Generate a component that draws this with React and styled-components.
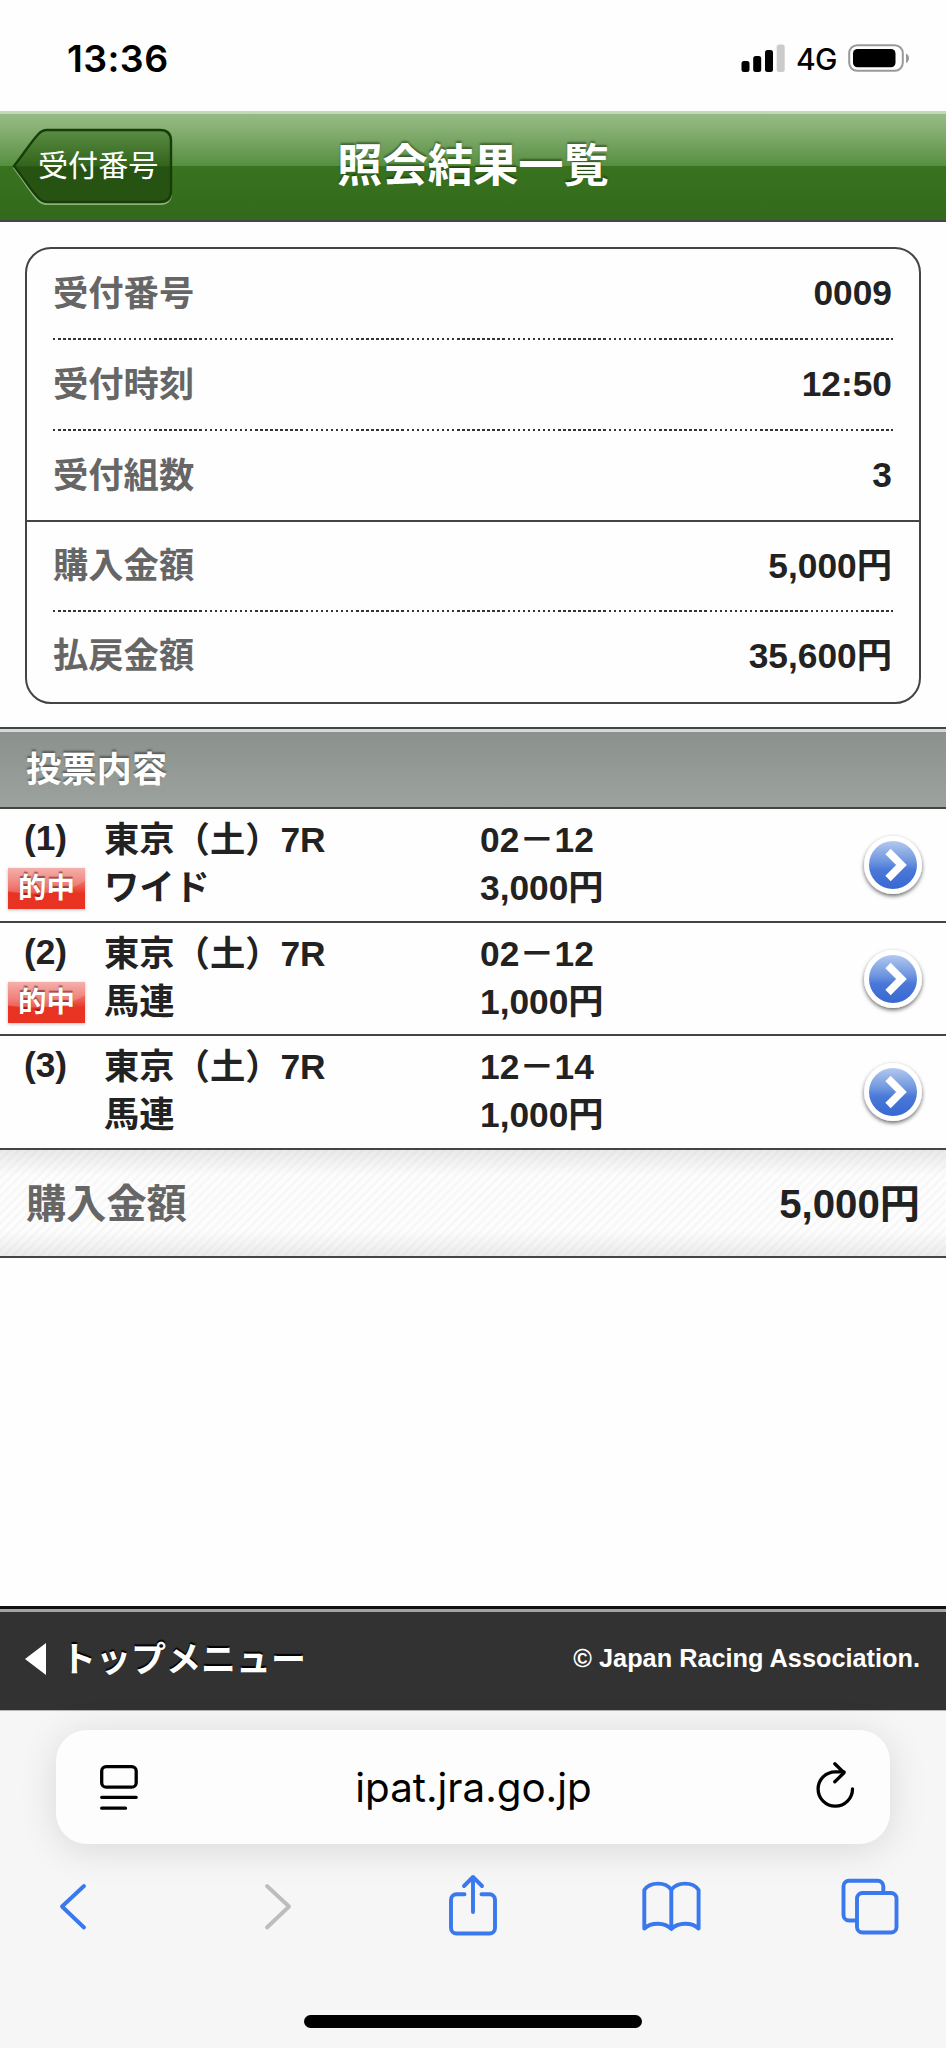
import styled, { createGlobalStyle } from "styled-components";

const GlobalStyle = createGlobalStyle`
  * {
    box-sizing: border-box;
  }
  body {
    margin: 0;
    background: #fefefe;
    color: #222;
    font-family: "Liberation Sans", "Noto Sans CJK JP", sans-serif;
  }
  svg {
    display: block;
    flex: none;
  }
`;

const Container = styled.div`
  width: 946px;
  height: 2048px;
  display: flex;
  flex-direction: column;
  overflow: hidden;
`;

const StatusBar = styled.div`
  height: 111px;
  padding: 5px 36px 0 67px;
  display: flex;
  align-items: center;
  justify-content: space-between;
  font-family: Inter, sans-serif;
  color: #000;
`;
const Clock = styled.span`
  font-size: 37.5px;
  font-weight: 600;
  letter-spacing: 0.4px;
`;
const StatusIcons = styled.div`
  display: flex;
  align-items: center;
  gap: 11px;
`;
const Network = styled.span`
  width: 41px;
  font-size: 30px;
  font-weight: 500;
  letter-spacing: -0.6px;
  line-height: 30px;
  padding-top: 1px;
`;

const Header = styled.header`
  height: 111px;
  display: grid;
  grid-template-columns: 180px 1fr 180px;
  align-items: center;
  border-top: 3px solid #c0d9b6;
  border-bottom: 2px solid #444;
  background: linear-gradient(
    #93bb83 0,
    #8bb278 12px,
    #568f40 52px,
    #39731f 52px,
    #32691c 100%
  );
`;
const BackButton = styled.a`
  display: grid;
  align-items: center;
  padding: 0 0 2px 11px;
  color: white;
  > * {
    grid-area: 1 / 1;
  }
`;
const BackLabel = styled.span`
  padding-left: 27px;
  font-size: 30.1px;
  line-height: 40px;
  position: relative;
`;
const Title = styled.h1`
  margin: 0;
  font-size: 45.3px;
  line-height: 60px;
  font-weight: 700;
  color: white;
  text-align: center;
  text-shadow: 0 -2px 2px rgba(0, 0, 0, 0.4);
`;

const Card = styled.dl`
  margin: 25px 25px 0;
  height: 457px;
  border: 2px solid #444;
  border-radius: 26px;
  display: grid;
  grid-template-rows: 91px 91px 91px 90px 1fr;
  flex: none;
`;
const CardRow = styled.div`
  display: flex;
  justify-content: space-between;
  align-items: center;
  margin: ${(p) => (p.$divider === "solid" ? "0" : "0 26px")};
  padding: ${(p) => (p.$divider === "solid" ? "0 26px" : "0 0 2px")};
  font-size: 35.3px;
  font-weight: 700;
  line-height: 50px;
  border-bottom: ${(p) => (p.$divider === "solid" ? "2px solid #444" : "none")};
  background: ${(p) =>
    p.$divider === "dotted"
      ? "repeating-linear-gradient(90deg, #333 0, #333 2.5px, transparent 2.5px, transparent 5.05px) bottom / 100% 2px no-repeat"
      : "none"};
`;
const Label = styled.dt`
  color: #666;
`;
const Value = styled.dd`
  margin: 0;
  padding: 0 1px 1px 0;
`;

const SectionTitle = styled.h2`
  flex: none;
  margin: 23px 0 0;
  height: 82px;
  padding: 0 26px;
  border-top: 2px solid #444;
  border-bottom: 2px solid #444;
  background: linear-gradient(#d5dad6 0, #d5dad6 3px, #8b918c 3px, #9ca39e 100%);
  color: white;
  font-size: 35.3px;
  line-height: 82px;
  text-shadow: 0 -2px 2px rgba(0, 0, 0, 0.4);
`;
const BetRow = styled.div`
  flex: none;
  height: ${(p) => p.$height}px;
  display: grid;
  grid-template-columns: 104px 376px 1fr 88px;
  padding-top: 7px;
  border-bottom: 2px solid #444;
  font-size: 35.3px;
  font-weight: 700;
  line-height: 48px;
  > svg {
    margin-top: 14px;
  }
`;
const BetNumber = styled.div`
  padding-left: 8px;
  line-height: 44px;
`;
const Index = styled.div`
  width: 75px;
  text-align: center;
`;
const HitBadge = styled.div`
  width: 77px;
  height: 41px;
  margin-top: 8px;
  background: radial-gradient(
      ellipse 62px 26px at 32% 0,
      rgba(255, 255, 255, 0.2) 96%,
      transparent
    ),
    linear-gradient(#f29c97 0, #ec5a51 45%, #e83323 62%, #e93423 100%);
  box-shadow: 0 1px 3px rgba(0, 0, 0, 0.25);
  color: white;
  font-size: 28.5px;
  line-height: 41px;
  text-align: center;
  text-shadow: 0 -2px 1px rgba(80, 0, 0, 0.5);
`;
const BetInfo = styled.div`
  display: flex;
  flex-direction: column;
`;
const Total = styled.div`
  flex: none;
  height: 108px;
  display: flex;
  align-items: center;
  justify-content: space-between;
  padding: 3px 26px 0;
  border-bottom: 2px solid #444;
  background: linear-gradient(
      rgba(0, 0, 0, 0.08),
      transparent 24%,
      transparent 76%,
      rgba(0, 0, 0, 0.07)
    ),
    repeating-linear-gradient(135deg, #f7f7f7 0, #f7f7f7 1.5px, #fdfdfd 2.5px, #fdfdfd 5.5px, #f7f7f7 6.4px);
  font-size: 40.2px;
  font-weight: 700;
  line-height: 56px;
`;
const TotalLabel = styled.span`
  color: #666;
`;

const Footer = styled.footer`
  flex: none;
  margin-top: auto;
  height: 104px;
  display: flex;
  align-items: center;
  justify-content: space-between;
  padding: 0 26px 0 25px;
  border-top: 3px solid #111;
  background: linear-gradient(#a5a5a5 3px, #323232 3px);
  color: white;
  font-weight: 700;
`;
const TopMenu = styled.a`
  display: flex;
  align-items: center;
  gap: 15px;
  font-size: 35px;
  line-height: 50px;
  text-shadow: 0 -2px 1px #000;
`;
const Copyright = styled.small`
  font-size: 25.3px;
  padding-bottom: 3px;
`;

const BrowserBar = styled.div`
  height: 338px;
  padding: 19px 56px 0;
  border-top: 1px solid #b5b5b5;
  background: #f6f6f6;
  flex: none;
`;
const AddressBar = styled.div`
  height: 114px;
  display: flex;
  align-items: center;
  justify-content: space-between;
  padding: 0 33px 0 42px;
  border-radius: 31px;
  background: #fdfdfd;
  box-shadow: 0 5px 38px rgba(0, 0, 0, 0.12);
`;
const Url = styled.span`
  padding-right: 6px;
  font-family: Inter, sans-serif;
  font-size: 40.3px;
  color: #000;
`;
const Toolbar = styled.nav`
  display: flex;
  justify-content: space-between;
  margin: 28px -11px 0 -15px;
  color: #3a78ee;
`;
const ToolIcon = styled.svg`
  width: 64px;
  height: 64px;
  fill: none;
  stroke: ${(p) => (p.$disabled ? "#bdbdbd" : "currentColor")};
  stroke-width: 3.9;
  stroke-linecap: round;
  stroke-linejoin: round;
`;
const HomeIndicator = styled.div`
  width: 338px;
  height: 13px;
  margin: 79px auto 0;
  border-radius: 7px;
  background: #000;
`;

const summary = [
  { label: "受付番号", value: "0009", divider: "dotted" },
  { label: "受付時刻", value: "12:50", divider: "dotted" },
  { label: "受付組数", value: "3", divider: "solid" },
  { label: "購入金額", value: "5,000円", divider: "dotted" },
  { label: "払戻金額", value: "35,600円" },
];

const bets = [
  { race: "東京（土）7R", type: "ワイド", pick: "02－12", amount: "3,000円", hit: true, height: 114 },
  { race: "東京（土）7R", type: "馬連", pick: "02－12", amount: "1,000円", hit: true, height: 113 },
  { race: "東京（土）7R", type: "馬連", pick: "12－14", amount: "1,000円", hit: false, height: 114 },
];

const SignalIcon = () => (
  <svg width="44" height="28" viewBox="0 0 44 28">
    <rect x="0.5" y="17" width="8" height="11" rx="2.5" />
    <rect x="12.2" y="12" width="8" height="16" rx="2.5" />
    <rect x="24" y="6" width="8" height="22" rx="2.5" />
    <rect x="35.7" y="0.5" width="8" height="27.5" rx="2.5" fill="#cbcbcb" />
  </svg>
);

const BatteryIcon = () => (
  <svg width="62" height="28" viewBox="0 0 62 28">
    <rect x="1.2" y="1.2" width="53.6" height="25.6" rx="8" fill="none" stroke="#999" strokeWidth="2" />
    <rect x="5" y="5" width="42.5" height="18.2" rx="4.5" />
    <path d="M58 9.5c4 1.5 4 8 0 9.5z" fill="#999" />
  </svg>
);

const BackShape = () => (
  <svg width="164" height="78" viewBox="0 0 164 78">
    <defs>
      <linearGradient id="back" x1="0" y1="0" x2="0" y2="1">
        <stop offset="0" stopColor="#5a8c43" />
        <stop offset="0.5" stopColor="#33641b" />
        <stop offset="0.51" stopColor="#265311" />
        <stop offset="1" stopColor="#275213" />
      </linearGradient>
    </defs>
    <path
      d="M3 40 C14 26 20 15 27 8 Q31 4 36 4 H149 Q160 4 160 15 V65 Q160 76 149 76 H36 Q31 76 27 72 C20 65 14 54 3 40Z"
      fill="none"
      stroke="#8cb37b"
      strokeWidth="2"
      transform="translate(0 1)"
    />
    <path
      d="M3 39 C14 25 20 15 27 7.500 Q31 3 36 3 H149 Q160 3 160 14 V64 Q160 75 149 75 H36 Q31 75 27 70.500 C20 63 14 53 3 39Z"
      fill="url(#back)"
      stroke="#173d08"
      strokeWidth="2.4"
    />
  </svg>
);

const ArrowBadge = () => (
  <svg width="70" height="74" viewBox="0 0 70 74">
    <defs>
      <linearGradient id="blue" x1="0" y1="0" x2="0" y2="1">
        <stop offset="0" stopColor="#b3c9ee" />
        <stop offset="0.42" stopColor="#6f96df" />
        <stop offset="0.6" stopColor="#4a78d8" />
        <stop offset="1" stopColor="#3768d2" />
      </linearGradient>
      <filter id="shade" x="-20%" y="-20%" width="140%" height="150%">
        <feDropShadow dx="0" dy="2" stdDeviation="2.2" floodColor="#000" floodOpacity="0.6" />
      </filter>
    </defs>
    <circle cx="35" cy="35" r="29" fill="#fff" filter="url(#shade)" />
    <circle cx="35" cy="35" r="24" fill="url(#blue)" />
    <path d="M30 21.500 L43.500 35 L30 48.500" fill="none" stroke="#fff" strokeWidth="7.500" />
  </svg>
);

function App() {
  return (
    <Container>
      <GlobalStyle />
      <StatusBar>
        <Clock>13:36</Clock>
        <StatusIcons>
          <SignalIcon />
          <Network>4G</Network>
          <BatteryIcon />
        </StatusIcons>
      </StatusBar>

      <Header>
        <BackButton>
          <BackShape />
          <BackLabel>受付番号</BackLabel>
        </BackButton>
        <Title>照会結果一覧</Title>
      </Header>

      <Card>
        {summary.map((row) => (
          <CardRow key={row.label} $divider={row.divider}>
            <Label>{row.label}</Label>
            <Value>{row.value}</Value>
          </CardRow>
        ))}
      </Card>

      <SectionTitle>投票内容</SectionTitle>
      {bets.map((bet, i) => (
        <BetRow key={i} $height={bet.height}>
          <BetNumber>
            <Index>({i + 1})</Index>
            {bet.hit && <HitBadge>的中</HitBadge>}
          </BetNumber>
          <BetInfo>
            <span>{bet.race}</span>
            <span>{bet.type}</span>
          </BetInfo>
          <BetInfo>
            <span>{bet.pick}</span>
            <span>{bet.amount}</span>
          </BetInfo>
          <ArrowBadge />
        </BetRow>
      ))}
      <Total>
        <TotalLabel>購入金額</TotalLabel>
        <span>5,000円</span>
      </Total>

      <Footer>
        <TopMenu>
          <svg width="21" height="34" viewBox="0 0 21 34">
            <path d="M0 16 L21 0 V32Z" fill="#fff" />
          </svg>
          トップメニュー
        </TopMenu>
        <Copyright>© Japan Racing Association.</Copyright>
      </Footer>

      <BrowserBar>
        <AddressBar>
          <svg width="42" height="50" viewBox="0 0 42 50" fill="none" stroke="#000" strokeWidth="3.300" strokeLinecap="round">
            <rect x="3.700" y="4.700" width="34.500" height="20.500" rx="4.500" />
            <path d="M3.700 35.300 H38.200 M3.700 46.200 H27.500" />
          </svg>
          <Url>ipat.jra.go.jp</Url>
          <svg width="44" height="50" viewBox="0 0 44 50" fill="none" stroke="#000" strokeWidth="3.300" strokeLinecap="round" strokeLinejoin="round">
            <path d="M39.500 27 A17.200 17.200 0 1 1 22.300 9.800 H31" />
            <path d="M21.800 1.800 L31 10.800 L21.800 19.800" />
          </svg>
        </AddressBar>
        <Toolbar>
          <ToolIcon viewBox="0 0 64 64">
            <path d="M43 14 L21 34.500 L43 55.500" />
          </ToolIcon>
          <ToolIcon viewBox="0 0 64 64" $disabled>
            <path d="M27 14 L49 34.500 L27 55.500" />
          </ToolIcon>
          <ToolIcon viewBox="0 0 64 64">
            <path d="M25.500 22.200 H17.500 a5.500 5.500 0 0 0 -5.500 5.500 V56 a5.500 5.500 0 0 0 5.500 5.500 H50.500 a5.500 5.500 0 0 0 5.500 -5.500 V27.700 a5.500 5.500 0 0 0 -5.500 -5.500 H42.500" />
            <path d="M34 40 V5 M25 14 L34 5 L43 14" />
          </ToolIcon>
          <ToolIcon viewBox="0 0 64 64">
            <path d="M33.300 18 C28 9.500 12 9.500 6.300 18 V56.500 C13 50 27 50 33.300 57 C40 50 54 50 60.600 56.500 V18 C55 9.500 39 9.500 33.300 18 V56" />
          </ToolIcon>
          <ToolIcon viewBox="0 0 64 64">
            <rect x="20" y="21" width="39.500" height="39.500" rx="5.500" />
            <path d="M46.300 20 V14.300 a5.500 5.500 0 0 0 -5.500 -5.500 H12 a5.500 5.500 0 0 0 -5.500 5.500 V43 a5.500 5.500 0 0 0 5.500 5.500 H19" />
          </ToolIcon>
        </Toolbar>
        <HomeIndicator />
      </BrowserBar>
    </Container>
  );
}

export default App;
